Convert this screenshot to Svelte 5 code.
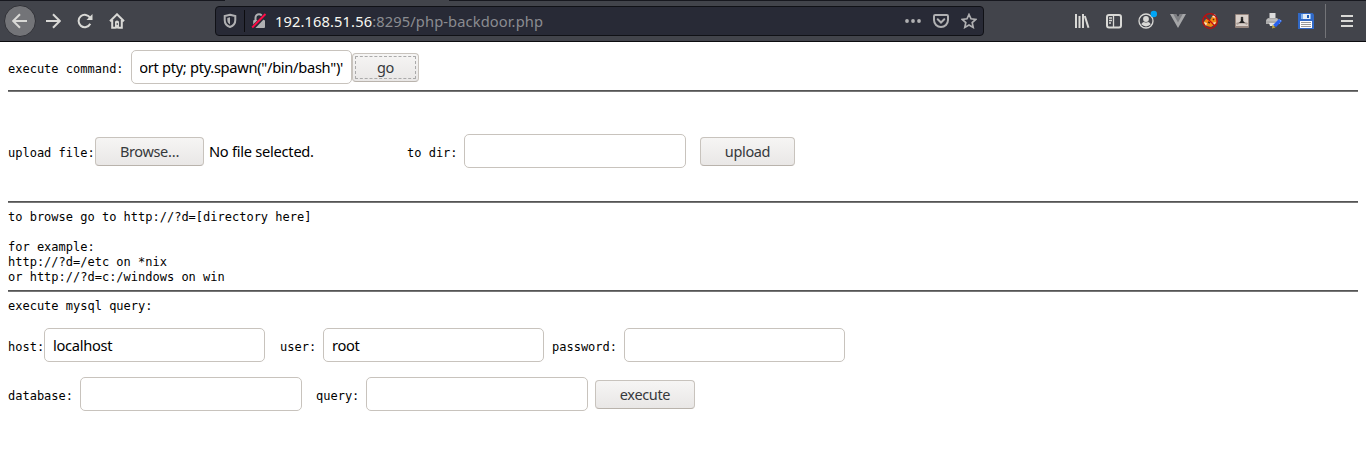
<script>
  let host = $state('localhost');
  let user = $state('root');
</script>

<div class="page">
  <header>
    <div class="tabline"></div>
    <nav>
      <span class="slot back"><svg width="16" height="16" viewBox="0 0 16 16"><path d="M8 1.2 1.2 8 8 14.800M1.500 8H15" /></svg></span>
      <span class="slot"><svg width="16" height="16" viewBox="0 0 16 16"><path d="M8 1.2 14.800 8 8 14.800M14.500 8H1" /></svg></span>
      <span class="slot"><svg width="16" height="16" viewBox="0 0 16 16"><path d="M13.200 5A6.200 6.200 0 1 0 13.300 10.800" /><path class="solid" d="M15.500 1V7H9.500Z" /></svg></span>
      <span class="slot"><svg width="16" height="16" viewBox="0 0 16 16"><path d="M1 8.300 8 1.300l7 7M3.200 7V14.800H6.500M12.800 7V14.800H9.500" /><path class="solid" d="M6 9q0-1.500 2-1.500T10 9v6.500H6Z" /><path d="M8.200 10v2" style:stroke="#42444b" style:stroke-width="1" /></svg></span>
    </nav>
    <div class="url">
      <svg class="shield" width="14" height="16" viewBox="0 0 14 16"><path d="M7 1.800 12.300 3.100V7C12.300 10.500 10 13 7 14 4 13 1.700 10.500 1.700 7V3.100Z" /><path class="solid" d="M7 4.200v7.300C5 10.300 4.300 8.700 4.300 7V5Z" /></svg>
      <i></i>
      <svg class="lock" width="16" height="16" viewBox="0 0 16 16"><path d="M4.500 7V4.800a3.500 3.500 0 0 1 7 0V7" /><rect class="solid" x="2.200" y="7" width="11.800" height="8" rx="1" /><path class="cut" d="M1.200 15.500 14.500 1.500" /><path class="slash" d="M1.200 14.500 14.500 1" /></svg>
      <p><b>192.168.51.56</b>:8295/php-backdoor.php</p>
      <span class="actions">
        <svg width="16" height="16" viewBox="0 0 16 16"><g class="solid"><circle cx="2" cy="8" r="1.900" /><circle cx="8" cy="8" r="1.900" /><circle cx="14" cy="8" r="1.900" /></g></svg>
        <svg width="16" height="16" viewBox="0 0 16 16"><path d="M2.200 2H13.800Q15 2 15 3.200V7A7 7 0 0 1 1 7V3.200Q1 2 2.200 2ZM4.700 6.300 8 9.500l3.300-3.200" stroke-linecap="round" /></svg>
        <svg width="16" height="16" viewBox="0 0 16 16"><path d="m8 1.500 2 4.300 4.800.6-3.600 3.200 1 4.800L8 12l-4.200 2.400 1-4.800L1.200 6.400 6 5.800Z" stroke-width="1.700" /></svg>
      </span>
    </div>
    <div class="tools">
      <span class="slot"><svg width="16" height="16" viewBox="0 0 16 16"><path d="M2 1V15M5.500 3V15M9 1V15M10.800 3 14.500 14.800" /></svg></span>
      <span class="slot"><svg width="16" height="16" viewBox="0 0 16 16"><rect x="1" y="2" width="14" height="12.500" rx="2" /><path class="fine" d="M7.500 2v12" /><path class="fine" d="M3 5h3M3 7.500h3M3 10h2" /></svg></span>
      <span class="slot"><svg width="22" height="24" viewBox="-3 -4 22 24"><circle class="fine" cx="8" cy="8" r="7" /><circle class="solid" cx="8" cy="6" r="2.900" /><path class="solid" d="M3.200 11.300Q5 8.800 6 9q2 1.200 4 0 1-.2 2.800 2.300Q8 15.500 3.200 11.300Z" /><circle cx="15.800" cy="1" r="3.200" fill="#00a5f5" stroke="none" /></svg></span>
      <span class="slot"><svg width="16" height="16" viewBox="0 0 16 16"><g stroke="none"><path d="M0 1H6L8 4.500 10 1h6L8 15Z" fill="#a5a6a8" /><path d="M3.200 1H6L8 4.500 10 1h2.800L8 9.500Z" fill="#7d7e82" /></g></svg></span>
      <span class="slot"><svg class="fox" width="16" height="16" viewBox="0 0 16 16"><g stroke="none"><path d="M1 10 4 6l4 1 3-5 3 3 1 5-6 4-4-1Z" fill="#f28a13" /><path d="m10 4 3-3 1 4ZM2 9l3 1-1 3ZM10 10l4-1-2 3Z" fill="#f8e5cc" /></g><path d="m6 9 2 1M11 6l1 1" stroke="#5b280d" /><circle class="ban" cx="8" cy="8" r="7.300" /><path class="ban" d="m3 3 10 10" /></svg></span>
      <span class="slot"><svg width="14" height="14" viewBox="0 0 14 14"><rect width="14" height="14" rx="1" fill="#97877f" stroke="none" /><rect x="1" y="1" width="12" height="11" fill="#d9d0ca" stroke="none" /><path d="M1.500 10q5.500-3 11 0" style:stroke="#a89c95" /><path d="M4 9 5.800 7V5q1.200-2 2.400 0v2L10 9Z" fill="#222" stroke="none" /><circle cx="7" cy="4" r="1.300" fill="#333" stroke="none" /></svg></span>
      <span class="slot"><svg class="printer" width="16" height="16" viewBox="0 0 16 16"><g stroke="none"><path d="M3.500 0h6v5h-6Z" fill="#ddd" /><path d="M2 5h9l3 3v3H0V7Z" fill="#aaa" /><path d="M1 6.500h10v1H1Z" fill="#ccc" /><path d="M3 10h7v3H4Z" fill="#e3e3e3" /><path d="m7 12 6-6 3 2-6 6Z" fill="#2862ed" /><path d="m13 6 2.500 1.700-1 1Z" fill="#73a3ff" /><path d="m6.500 11.500 3 3-3.500 1Z" fill="#b7a346" /></g></svg></span>
      <span class="slot"><svg width="16" height="16" viewBox="0 0 16 16"><g stroke="none"><path d="M0 0H14.500L16 1.500V16H0Z" fill="#3169c6" /><path d="M3 1h10v5H3Z" fill="#7db0ee" /><path d="M5 1h7v5H5Z" fill="#e5edf7" /><path d="M9 2h2v3H9Z" fill="#1e5cb5" /><path d="M2 8h12v7H2Z" fill="#fff" /><path d="M3 9h10v1H3ZM3 11h10v1H3ZM3 13h10v1H3Z" fill="#999" /></g></svg></span>
      <i></i>
      <span class="slot menu"><svg width="12" height="12" viewBox="0 0 12 12"><path d="M0 1H12M0 6H12M0 11H12" /></svg></span>
    </div>
  </header>

  <main>
    <form class="row command">
      <label for="cmd" style:width="123px">execute command:</label>
      <div class="field clipped" id="cmd"><span>ort pty; pty.spawn("/bin/bash")'</span></div>
      <button type="button" class="focused" style:width="67px">go</button>
    </form>
    <hr />
    <form class="row upload">
      <label for="file" style:width="87px">upload file:</label>
      <button type="button" id="file" style:width="109px">Browse…</button>
      <span class="status">No file selected.</span>
      <label for="dir" style:width="57px">to dir:</label>
      <input id="dir" class="wide" />
      <button type="button" class="submit" style:width="95px">upload</button>
    </form>
    <hr />
    <pre class="help">to browse go to http://?d=[directory here]

for example:
http://?d=/etc on *nix
or http://?d=c:/windows on win</pre>
    <hr />
    <pre class="title">execute mysql query:</pre>
    <form class="row sql">
      <label for="host" style:width="36px">host:</label>
      <input id="host" bind:value={host} />
      <label for="user" class="gap" style:width="43px">user:</label>
      <input id="user" bind:value={user} />
      <label for="pass" class="near" style:width="72px">password:</label>
      <input id="pass" />
    </form>
    <form class="row query">
      <label for="db" style:width="72px">database:</label>
      <input id="db" class="wide" />
      <label for="q" class="between" style:width="50px">query:</label>
      <input id="q" class="wide" />
      <button type="button" class="exec" style:width="100px">execute</button>
    </form>
  </main>
</div>

<style>
  :global(body) { margin: 0; background: #fff; }
  * { box-sizing: border-box; }
  .page { height: 456px; overflow: hidden; font-family: "Noto Sans", sans-serif; font-size: 14.67px; color: #000; }
  header { height: 42px; display: grid; grid-template: 1px 40px / 215px 769px 1fr; background: #42444b; border-bottom: 1px solid #0c0c0f; }
  .tabline { grid-column: 1 / -1; background: linear-gradient(90deg, #17181f 225px, #42444b 225px 449px, #17181f 449px); }
  nav, .tools { display: flex; align-items: center; }
  nav { padding-left: 4px; }
  .slot { width: 32px; height: 32px; flex: none; display: flex; align-items: center; justify-content: center; }
  .back { margin-right: 1px; border-radius: 50%; background: #737478; border: 1px solid #303137; }
  svg { fill: none; stroke: #d9d9d6; stroke-width: 2; flex: none; }
  .solid { fill: #d9d9d6; stroke: none; }
  .fine { stroke-width: 1.3; }
  .fox { stroke-width: 1.5; }
  .ban { stroke: #c70c0c; stroke-width: 1.3; }
  .url { height: 30px; align-self: center; display: flex; align-items: center; background: #282a36; border: 1px solid #101116; border-radius: 4px; padding-left: 7px; color: #8b8c91; }
  .url svg { stroke: #b0b0b2; }
  .url .solid { fill: #b0b0b2; }
  .url .cut { stroke: #282a36; stroke-width: 4; }
  .url .slash { stroke: #ff0b45; }
  .url i { width: 1px; height: 22px; margin: 0 6px 0 7px; background: #0c0c0f; }
  .url p { margin: 0 0 0 8px; font-size: 14.67px; letter-spacing: .12px; line-height: 20px; white-space: nowrap; }
  .url b { font-weight: 400; color: #f8f8f2; }
  .actions { margin-left: auto; display: flex; gap: 12px; padding-right: 6px; }
  .tools { padding-left: 82px; }
  .tools i { width: 1px; height: 34px; margin: 0 5px 0 3px; background: #737478; }
  main { padding: 8px 8px 0; }
  .row { height: 34px; display: flex; align-items: center; }
  label, pre { font-family: "DejaVu Sans Mono", monospace; font-size: 12px; line-height: 15px; white-space: pre; margin: 0; }
  label { flex: none; padding-top: 5px; }
  hr { height: 2px; border: 0; margin: 0; background: linear-gradient(#555 50%, #777 50%); }
  input, .field { width: 221px; height: 34px; flex: none; margin: 0; border: 1px solid #c8c3bd; border-radius: 5px; background: #fff; padding: 0 8px; font: 14.67px/20px "Noto Sans", sans-serif; letter-spacing: -.3px; color: #000; outline: none; }
  .wide { width: 222px; }
  .clipped { display: flex; align-items: center; }
  .clipped span { display: flex; justify-content: flex-end; width: 204px; overflow: hidden; white-space: nowrap; }
  button { height: 29px; flex: none; margin: 1px 0 0; padding: 0 0 2px; border: 1px solid #c8c3bd; border-bottom-color: #b9b3ac; border-radius: 4px; background: linear-gradient(#f6f5f4, #e9e7e6); font: 14.5px/20px "Noto Sans", sans-serif; letter-spacing: -.35px; color: #36393b; }
  .focused { outline: 1px dashed #aaa; outline-offset: -4px; }
  .command { margin-bottom: 6px; }
  .upload { margin: 42px 0 33px; }
  .status { width: 198px; margin-left: 5px; letter-spacing: -.27px; white-space: nowrap; }
  .submit { margin-left: 14px; }
  .help { margin: 7px 0 5px; }
  .title { margin: 7px 0 14px; }
  .gap { margin-left: 15px; }
  .near { margin-left: 8px; }
  .between { margin-left: 14px; }
  .exec { margin-left: 7px; }
  .query { margin-top: 15px; }
</style>
